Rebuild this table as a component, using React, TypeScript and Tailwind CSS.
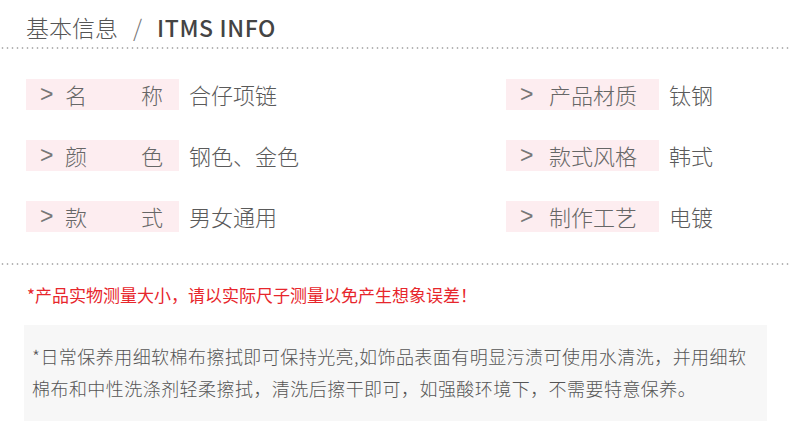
import React from 'react';

const dots =
  'h-[2px] w-full bg-[radial-gradient(circle,#b5b5b5_0.8px,transparent_1.2px)] bg-[length:5px_2px] bg-repeat-x';

const specs: { label: string; value: string; spread: boolean }[][] = [
  [
    { label: '名称', value: '合仔项链', spread: true },
    { label: '产品材质', value: '钛钢', spread: false },
  ],
  [
    { label: '颜色', value: '钢色、金色', spread: true },
    { label: '款式风格', value: '韩式', spread: false },
  ],
  [
    { label: '款式', value: '男女通用', spread: true },
    { label: '制作工艺', value: '电镀', spread: false },
  ],
];

const SpecItem: React.FC<{ label: string; value: string; spread: boolean }> = ({ label, value, spread }) => (
  <div className="flex items-center">
    <div className="flex items-center w-[153px] h-[31px] bg-[#fdedf0] pl-[14px] pr-[16px] text-[22px] text-[#666]">
      <span className="w-[25px] font-['Liberation_Sans',sans-serif] text-[23px] font-normal text-[#777]">&gt;</span>
      {spread ? (
        <span className="flex-1 flex justify-between">
          <span>{label[0]}</span>
          <span>{label[1]}</span>
        </span>
      ) : (
        <span className="pl-[4px]">{label}</span>
      )}
    </div>
    <span className="ml-[10px] text-[22px] text-[#5a5a5a]">{value}</span>
  </div>
);

export default function App() {
  return (
    <div className="w-[790px] h-[437px] bg-white font-['Noto_Sans_CJK_SC','Noto_Sans',sans-serif] font-extralight overflow-hidden">
      <div className="pt-[13px] pl-[26px] text-[23px] leading-[28px] text-[#555] flex items-center">
        <span>基本信息</span>
        <span className="mx-[15px] text-[#777]">/</span>
        <span className="font-medium text-[#444] tracking-[0.6px]">ITMS INFO</span>
      </div>
      <div className={`mt-[6px] ${dots}`} />

      <div className="mt-[30px] pl-[26px] flex flex-col gap-[30px] leading-[31px]">
        {specs.map((row, i) => (
          <div key={i} className="grid grid-cols-[480px_1fr]">
            <SpecItem {...row[0]} />
            <SpecItem {...row[1]} />
          </div>
        ))}
      </div>

      <div className={`mt-[31px] ${dots}`} />

      <p className="mt-[18px] pl-[27px] text-[17px] leading-[24px] text-[#e7262c] font-normal">
        *产品实物测量大小，请以实际尺子测量以免产生想象误差！
      </p>

      <div className="mt-[18px] ml-[24px] w-[743px] h-[96px] bg-[#f7f7f7] pt-[15px] pl-[8px] text-[18px] tracking-[0.45px] leading-[32px] text-[#555]">
        *日常保养用细软棉布擦拭即可保持光亮,如饰品表面有明显污渍可使用水清洗，并用细软
        <br />
        棉布和中性洗涤剂轻柔擦拭，清洗后擦干即可，如强酸环境下，不需要特意保养。
      </div>
    </div>
  );
}
